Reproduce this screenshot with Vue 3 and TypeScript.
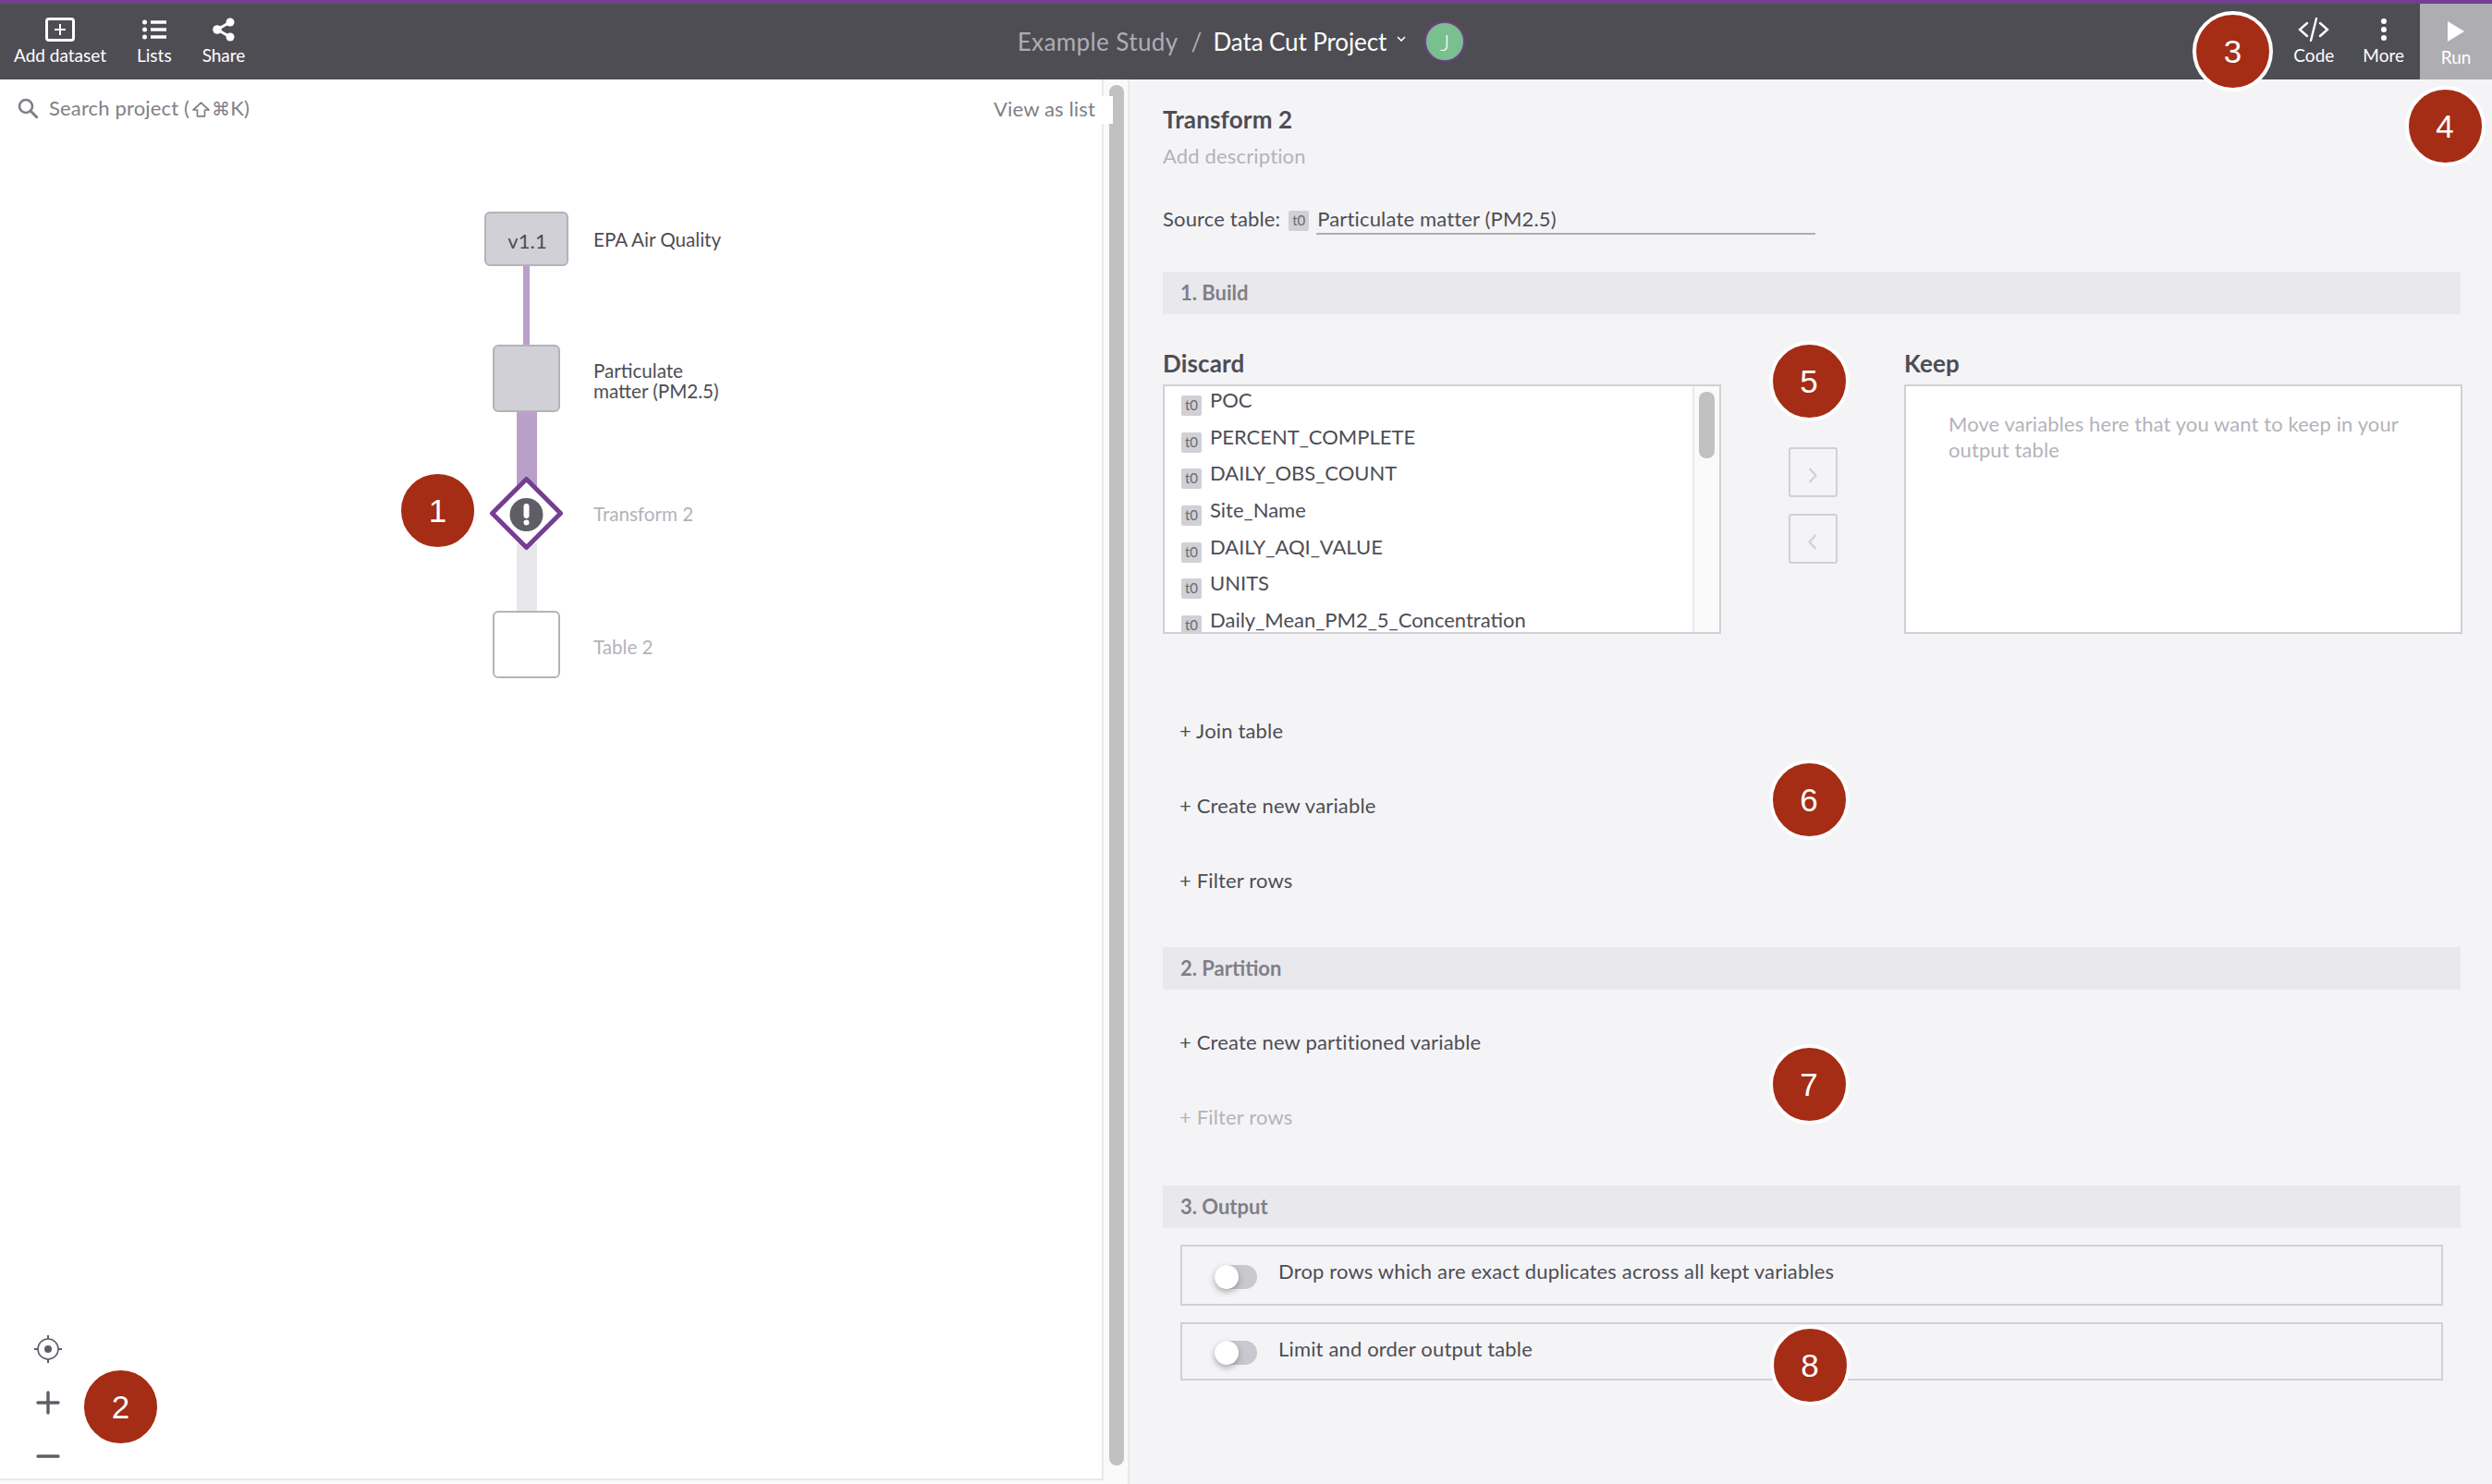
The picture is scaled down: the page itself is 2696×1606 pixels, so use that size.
<script setup lang="ts">
interface CanvasBox {
  left: number
  top: number
  width: number
  height: number
}

// canvas coordinates start right under the search row
const edges = [
  { left: 566, top: 140, width: 7, height: 85, color: '#b9a0c9' },
  { left: 559, top: 298, width: 22, height: 80, color: '#b9a0c9' },
  { left: 559, top: 440, width: 22, height: 80, color: '#e8e7ec' },
]

const nodes = [
  { left: 524, top: 81, width: 91, height: 59, cls: 'node--done', text: 'v1.1' },
  { left: 533, top: 225, width: 73, height: 73, cls: 'node--done', text: '' },
  { left: 533, top: 513, width: 73, height: 73, cls: 'node--empty', text: '' },
]

const labels = [
  { left: 642, top: 100, text: 'EPA Air Quality', muted: false },
  { left: 642, top: 242, text: 'Particulate\nmatter (PM2.5)', muted: false },
  { left: 642, top: 397, text: 'Transform 2', muted: true },
  { left: 642, top: 541, text: 'Table 2', muted: true },
]

const discard = [
  'POC',
  'PERCENT_COMPLETE',
  'DAILY_OBS_COUNT',
  'Site_Name',
  'DAILY_AQI_VALUE',
  'UNITS',
  'Daily_Mean_PM2_5_Concentration',
]

const badges = [
  { n: 1, x: 473.5, y: 552 },
  { n: 2, x: 130.5, y: 1522 },
  { n: 3, x: 2415.5, y: 55 },
  { n: 4, x: 2645, y: 136 },
  { n: 5, x: 1957, y: 412 },
  { n: 6, x: 1957, y: 865 },
  { n: 7, x: 1957, y: 1173 },
  { n: 8, x: 1958, y: 1477 },
]

function boxStyle(b: CanvasBox) {
  return {
    left: `${b.left}px`,
    top: `${b.top}px`,
    width: `${b.width}px`,
    height: `${b.height}px`,
  }
}
</script>

<template>
  <div class="app">
    <header class="topbar">
      <div class="topbar-left">
        <div class="tool">
          <svg width="32" height="26" viewBox="0 0 32 26">
            <rect x="1.5" y="1.5" width="29" height="23" rx="2.5" fill="none" stroke="#fff" stroke-width="3" />
            <path d="M16 7v12M10 13h12" stroke="#fff" stroke-width="2" fill="none" />
          </svg>
          <span>Add dataset</span>
        </div>
        <div class="tool">
          <svg width="26" height="26" viewBox="0 0 26 26">
            <circle cx="2.5" cy="5" r="2.5" fill="#fff" />
            <circle cx="2.5" cy="13" r="2.5" fill="#fff" />
            <circle cx="2.5" cy="21" r="2.5" fill="#fff" />
            <path d="M9 5h17M9 13h17M9 21h17" stroke="#fff" stroke-width="3.6" fill="none" />
          </svg>
          <span>Lists</span>
        </div>
        <div class="tool">
          <svg width="24" height="26" viewBox="0 0 24 26">
            <path d="M19 5L5 13l14 8" stroke="#fff" stroke-width="3" fill="none" />
            <circle cx="19" cy="5" r="4.5" fill="#fff" />
            <circle cx="5" cy="13" r="4.8" fill="#fff" />
            <circle cx="19" cy="21" r="4.5" fill="#fff" />
          </svg>
          <span>Share</span>
        </div>
      </div>

      <div class="crumbs">
        <span class="crumb-study">Example Study</span>
        <span class="crumb-sep">/</span>
        <span class="crumb-project">Data Cut Project</span>
        <svg class="crumb-caret" width="10" height="6" viewBox="0 0 10 6">
          <path d="M1 1l4 4 4-4" stroke="#fff" stroke-width="1.6" fill="none" />
        </svg>
        <span class="avatar">J</span>
      </div>

      <div class="topbar-right">
        <div class="tool tool--code">
          <svg width="34" height="26" viewBox="0 0 34 26">
            <path d="M10 6l-8 7 8 7M24 6l8 7-8 7M20 1l-6 24" stroke="#fff" stroke-width="2.4" fill="none" stroke-linecap="round" />
          </svg>
          <span>Code</span>
        </div>
        <div class="tool tool--more">
          <svg width="8" height="26" viewBox="0 0 8 26">
            <circle cx="4" cy="4" r="3" fill="#fff" />
            <circle cx="4" cy="13" r="3" fill="#fff" />
            <circle cx="4" cy="22" r="3" fill="#fff" />
          </svg>
          <span>More</span>
        </div>
        <div class="run">
          <svg width="18" height="22" viewBox="0 0 18 22"><path d="M0 0l18 11L0 22z" fill="#fff" /></svg>
          <span>Run</span>
        </div>
      </div>
    </header>

    <main class="body">
      <section class="graph-wrap">
        <div class="graph">
          <div class="search">
            <svg width="22" height="22" viewBox="0 0 22 22">
              <circle cx="9" cy="9" r="7" fill="none" stroke="#807f87" stroke-width="2.6" />
              <path d="M14 14l7 7" stroke="#807f87" stroke-width="3" stroke-linecap="round" />
            </svg>
            <span>Search project (<svg class="shift-key" width="19" height="17" viewBox="0 0 19 17"><path d="M9.5 1.2L18 9h-4.5v6.8h-8V9H1z" fill="none" stroke="#807f87" stroke-width="1.7" stroke-linejoin="round" /></svg><span class="keys">⌘</span>K)</span>
          </div>

          <div class="canvas">
            <div v-for="(e, i) in edges" :key="i" class="edge" :style="{ ...boxStyle(e), background: e.color }" />
            <div v-for="(n, i) in nodes" :key="i" class="node" :class="n.cls" :style="boxStyle(n)">{{ n.text }}</div>
            <svg class="diamond" width="81" height="81" viewBox="0 0 81 81">
              <path d="M40.5 3.5L77.5 40.5L40.5 77.5L3.5 40.5Z" fill="#fff" stroke="#743e91" stroke-width="5" stroke-linejoin="round" />
              <circle cx="40.5" cy="42" r="18" fill="#5f5e66" />
              <path d="M40.5 33v10" stroke="#fff" stroke-width="6" stroke-linecap="round" />
              <circle cx="40.5" cy="50.5" r="3" fill="#fff" />
            </svg>
            <div
              v-for="l in labels"
              :key="l.text"
              class="node-label"
              :class="{ 'node-label--muted': l.muted }"
              :style="{ left: `${l.left}px`, top: `${l.top}px` }"
            >{{ l.text }}</div>
          </div>

          <div class="zoom">
            <svg width="32" height="32" viewBox="0 0 32 32">
              <circle cx="16" cy="16" r="11" fill="none" stroke="#5f5e66" stroke-width="1.6" />
              <circle cx="16" cy="16" r="4" fill="#5f5e66" />
              <path d="M16 1v4M16 27v4M1 16h4M27 16h4" stroke="#5f5e66" stroke-width="2" />
            </svg>
            <svg width="32" height="32" viewBox="0 0 32 32">
              <path d="M5 16h22M16 5v22" stroke="#5f5e66" stroke-width="3.4" stroke-linecap="round" />
            </svg>
            <svg width="32" height="32" viewBox="0 0 32 32">
              <path d="M5 16h22" stroke="#5f5e66" stroke-width="3.4" stroke-linecap="round" />
            </svg>
          </div>
        </div>
        <div class="view-list">View as list</div>
        <div class="gutter"><div class="gutter-thumb" /></div>
      </section>

      <section class="editor">
        <h1 class="title">Transform 2</h1>
        <div class="desc">Add description</div>
        <div class="source">
          <span>Source table:</span>
          <span class="chip">t0</span>
          <span class="source-value">Particulate matter (PM2.5)</span>
        </div>

        <div class="bar">1. Build</div>

        <div class="columns">
          <div class="col">
            <div class="col-title">Discard</div>
            <div class="listbox">
              <div class="list-items">
                <div v-for="name in discard" :key="name" class="list-row">
                  <span class="chip">t0</span>
                  <span>{{ name }}</span>
                </div>
              </div>
              <div class="list-scroll"><div class="list-thumb" /></div>
            </div>
          </div>
          <div class="transfer">
            <button class="arrow">
              <svg width="10" height="17" viewBox="0 0 10 17"><path d="M1.5 1l7 7.5-7 7.5" stroke="#d1d0d6" stroke-width="2.2" fill="none" /></svg>
            </button>
            <button class="arrow">
              <svg width="10" height="17" viewBox="0 0 10 17"><path d="M8.5 1l-7 7.5 7 7.5" stroke="#d1d0d6" stroke-width="2.2" fill="none" /></svg>
            </button>
          </div>
          <div class="col">
            <div class="col-title">Keep</div>
            <div class="keepbox">Move variables here that you want to keep in your output table</div>
          </div>
        </div>

        <div class="actions actions--build">
          <div>+ Join table</div>
          <div>+ Create new variable</div>
          <div>+ Filter rows</div>
        </div>

        <div class="bar">2. Partition</div>

        <div class="actions actions--partition">
          <div>+ Create new partitioned variable</div>
          <div class="muted">+ Filter rows</div>
        </div>

        <div class="bar">3. Output</div>

        <div class="option option--first">
          <span class="toggle"><span class="knob" /></span>
          <span>Drop rows which are exact duplicates across all kept variables</span>
        </div>
        <div class="option option--second">
          <span class="toggle"><span class="knob" /></span>
          <span>Limit and order output table</span>
        </div>
      </section>
    </main>

    <div
      v-for="b in badges"
      :key="b.n"
      class="badge"
      :style="{ left: `${b.x}px`, top: `${b.y}px` }"
    >{{ b.n }}</div>
  </div>
</template>

<style>
html,
body {
  margin: 0;
  background: #fafafa;
}
</style>

<style scoped>
.app {
  position: relative;
  width: 2696px;
  height: 1606px;
  overflow: hidden;
  display: flex;
  flex-direction: column;
  font-family: "Lato", "Open Sans", sans-serif;
  color: #4e4d54;
  font-size: 22px;
  letter-spacing: 0.16px;
}

.topbar {
  flex: none;
  height: 86px;
  box-sizing: border-box;
  border-top: 4px solid #743e91;
  background: #4e4d54;
  display: grid;
  grid-template-columns: 1fr auto 1fr;
  align-items: stretch;
  color: #fff;
}

.topbar-left {
  display: flex;
  gap: 33px;
  padding-left: 15px;
}

.topbar-right {
  display: flex;
  justify-content: flex-end;
}

.tool {
  display: flex;
  flex-direction: column;
  align-items: center;
  padding-top: 15px;
  gap: 3px;
  font-size: 19px;
  letter-spacing: 0;
  line-height: 24px;
}

.tool--more {
  margin-left: 31px;
  margin-right: 17px;
}

.run {
  width: 78px;
  background: #aeadb2;
  display: flex;
  flex-direction: column;
  align-items: center;
  padding-top: 19px;
  box-sizing: border-box;
  gap: 5px;
  font-size: 19px;
  letter-spacing: 0;
  line-height: 24px;
}

.crumbs {
  display: flex;
  align-items: center;
  font-size: 26px;
  letter-spacing: 0.1px;
  margin-left: -10px;
}

.crumb-study {
  color: #aeadb2;
  letter-spacing: 0.4px;
}

.crumb-project {
  letter-spacing: -0.1px;
}

.crumb-sep {
  color: #aeadb2;
  margin: 0 12px 0 14px;
}

.crumb-caret {
  margin: -6px 20px 0 11px;
}

.avatar {
  width: 40px;
  height: 40px;
  border-radius: 50%;
  background: #7abf8e;
  border: 2px solid #743e91;
  display: flex;
  align-items: center;
  justify-content: center;
  font-size: 24px;
  font-weight: 300;
}

.body {
  flex: 1;
  display: flex;
  min-height: 0;
}

.graph-wrap {
  position: relative;
  flex: none;
  width: 1222px;
  display: flex;
  background: #fafafa;
}

.graph {
  width: 1194px;
  height: 1516px;
  box-sizing: border-box;
  background: #fff;
  border-right: 2px solid #e9e8ed;
  border-bottom: 2px solid #e9e8ed;
  display: flex;
  flex-direction: column;
}

.search {
  flex: none;
  height: 61px;
  padding-bottom: 1px;
  display: flex;
  align-items: center;
  gap: 12px;
  padding-left: 19px;
  color: #807f87;
}

.shift-key {
  margin: 0 2px 0 3px;
  vertical-align: -2px;
}

.keys {
  font-family: "DejaVu Sans", sans-serif;
  font-size: 20px;
}

.canvas {
  position: relative;
  flex: 1;
}

.edge,
.node,
.node-label,
.diamond {
  position: absolute;
}

.node {
  box-sizing: border-box;
  border-radius: 6px;
  border: 2px solid #b4b3ba;
  display: flex;
  align-items: center;
  justify-content: center;
  padding: 4px 0 0 2px;
}

.node--done {
  background: #d1d0d6;
}

.node--empty {
  background: #fff;
}

.diamond {
  left: 529px;
  top: 367px;
}

.node-label {
  white-space: pre-line;
  font-size: 20.6px;
  letter-spacing: 0;
  line-height: 22px;
}

.node-label--muted {
  color: #b4b3ba;
}

.zoom {
  flex: none;
  display: flex;
  flex-direction: column;
  gap: 26px;
  padding: 0 0 8px 36px;
}

.view-list {
  position: absolute;
  left: 1060px;
  top: 18px;
  width: 144px;
  height: 30px;
  box-sizing: border-box;
  padding-left: 15px;
  background: #fff;
  color: #807f87;
  line-height: 28px;
  z-index: 1;
}

.gutter {
  width: 28px;
  box-sizing: border-box;
  border-right: 2px solid #e9e8ed;
  padding: 6px 4px 20px 6px;
}

.gutter-thumb {
  width: 16px;
  height: 100%;
  border-radius: 8px;
  background: #c1c1c1;
}

.editor {
  flex: 1;
  background: #f4f4f7;
  box-sizing: border-box;
  padding: 28px 34px 0 36px;
  min-width: 0;
}

.title {
  margin: 0;
  font-size: 26px;
  font-weight: 700;
  line-height: 30px;
  color: #4e4d54;
}

.desc {
  margin-top: 11px;
  line-height: 28px;
  color: #b4b3ba;
}

.source {
  margin-top: 39px;
  display: flex;
  align-items: flex-start;
  line-height: 30px;
  height: 32px;
}

.source .chip {
  margin: 6px 8px 0 9px;
}

.source-value {
  width: 540px;
  box-sizing: border-box;
  padding-left: 1px;
  border-bottom: 2px solid #aeadb2;
}

.chip {
  flex: none;
  width: 22px;
  height: 22px;
  background: #d1d0d6;
  border-radius: 2px;
  font-size: 15px;
  letter-spacing: 0;
  line-height: 20px;
  text-align: center;
  color: #6a6970;
}

.bar {
  height: 46px;
  line-height: 45px;
  background: #e9e8ed;
  padding-left: 19px;
  color: #807f87;
  font-weight: 700;
  letter-spacing: 0;
}

.source + .bar {
  margin-top: 40px;
}

.columns {
  margin-top: 38px;
  display: grid;
  grid-template-columns: 604px 198px 604px;
}

.col-title {
  height: 30px;
  line-height: 30px;
  margin-bottom: 8px;
  font-size: 26px;
  font-weight: 700;
}

.listbox,
.keepbox {
  height: 270px;
  box-sizing: border-box;
  border: 2px solid #d1d0d6;
  background: #fff;
}

.listbox {
  display: flex;
}

.list-items {
  flex: 1;
  overflow: hidden;
  padding: 1px 0 0 18px;
  letter-spacing: 0;
}

.list-row {
  display: flex;
  gap: 9px;
  height: 39.67px;
  line-height: 28px;
}

.list-row .chip {
  margin-top: 9px;
}

.list-scroll {
  flex: none;
  width: 29px;
  box-sizing: border-box;
  border-left: 2px solid #e9e8ed;
  background: #fafafa;
  padding: 6px 0 0 5px;
}

.list-thumb {
  width: 17px;
  height: 72px;
  border-radius: 8px;
  background: #c1c1c1;
}

.keepbox {
  padding: 27px 46px 0;
  line-height: 28px;
  letter-spacing: 0.1px;
  color: #b4b3ba;
}

.transfer {
  display: flex;
  flex-direction: column;
  align-items: center;
  gap: 18px;
  padding-top: 106px;
}

.arrow {
  width: 53px;
  height: 54px;
  padding: 6px 0 0;
  box-sizing: border-box;
  border: 2px solid #d1d0d6;
  border-radius: 3px;
  background: transparent;
  display: flex;
  align-items: center;
  justify-content: center;
}

.actions {
  display: flex;
  flex-direction: column;
  line-height: 27px;
  padding-left: 18px;
}

.actions--build {
  margin-top: 91px;
  margin-bottom: 59px;
  gap: 54px;
}

.actions--partition {
  margin-top: 43px;
  margin-bottom: 61px;
  gap: 54px;
}

.muted {
  color: #b4b3ba;
}

.option {
  margin: 18px 19px 0;
  box-sizing: border-box;
  border: 2px solid #d1d0d6;
  padding: 13px 0 0 35px;
  display: flex;
  align-items: flex-start;
  gap: 23px;
  line-height: 28px;
}

.option--first {
  height: 66px;
}

.option--second {
  height: 63px;
}

.toggle {
  position: relative;
  flex: none;
  width: 46px;
  height: 26px;
  border-radius: 13px;
  background: #c9c8ce;
}

.option--first .toggle {
  margin-top: 7px;
}

.option--second .toggle {
  margin-top: 5px;
}

.knob {
  position: absolute;
  left: 0;
  top: 0;
  width: 26px;
  height: 26px;
  border-radius: 50%;
  background: #fff;
  box-shadow: 0 3px 6px rgba(78, 77, 84, 0.45);
}

.badge {
  position: absolute;
  width: 79px;
  height: 79px;
  margin: -43.5px 0 0 -43.5px;
  box-sizing: content-box;
  border: 4px solid #fff;
  border-radius: 50%;
  background: #a52c15;
  color: #fff;
  font-family: "Liberation Sans", sans-serif;
  font-size: 35px;
  line-height: 79px;
  text-align: center;
  z-index: 2;
}
</style>
